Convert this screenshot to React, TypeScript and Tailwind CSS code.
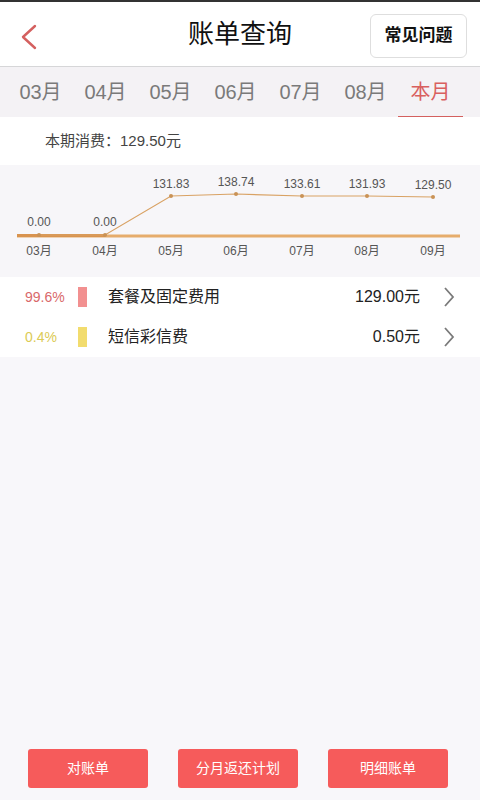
const tabs = ["03月", "04月", "05月", "06月", "07月", "08月", "本月"];

const points = [
  { m: "03月", x: 39, y: 70, v: "0.00", ty: 61 },
  { m: "04月", x: 105, y: 70, v: "0.00", ty: 61 },
  { m: "05月", x: 171, y: 31, v: "131.83", ty: 23 },
  { m: "06月", x: 236, y: 29, v: "138.74", ty: 21 },
  { m: "07月", x: 302, y: 31, v: "133.61", ty: 23 },
  { m: "08月", x: 367, y: 31, v: "131.93", ty: 23 },
  { m: "09月", x: 433, y: 32, v: "129.50", ty: 24 },
];

const items = [
  { pct: "99.6%", pctColor: "text-[#d9686a]", bar: "bg-[#f29090]", label: "套餐及固定费用", amount: "129.00元" },
  { pct: "0.4%", pctColor: "text-[#dccb55]", bar: "bg-[#f2dc6e]", label: "短信彩信费", amount: "0.50元" },
];

const font = { fontFamily: '"Liberation Sans", "Noto Sans CJK SC", sans-serif' };

function Chart() {
  const line = points.map((p) => `${p.x},${p.y}`).join(" ");
  return (
    <svg width="480" height="112" viewBox="0 0 480 112" className="block">
      <line x1="17" y1="71" x2="460" y2="71" stroke="#e6ac6c" strokeWidth="3" />
      <line x1="17" y1="70.5" x2="105" y2="70.5" stroke="#d8934f" strokeWidth="3" />
      <polyline points={line} fill="none" stroke="#d9a264" strokeWidth="1.2" />
      {points.map((p) => (
        <g key={p.m}>
          <circle cx={p.x} cy={p.y} r="2" fill="#c99256" />
          <text x={p.x} y={p.ty} textAnchor="middle" fontSize="12" fill="#555" style={font}>
            {p.v}
          </text>
          <text x={p.x} y={90} textAnchor="middle" fontSize="12" fill="#555" style={font}>
            {p.m}
          </text>
        </g>
      ))}
    </svg>
  );
}

export default function App() {
  return (
    <div className="flex h-[800px] w-[480px] flex-col bg-[#f8f7fa]" style={font}>
      <div className="h-[2px] bg-[#333]" />
      <header className="relative flex h-[65px] items-center justify-center border-b border-[#d6d6d8] bg-white">
        <svg className="absolute left-[19px] top-[22px]" width="20" height="26" viewBox="0 0 20 26">
          <polyline points="16,2 4,13 16,24" fill="none" stroke="#d4605f" strokeWidth="2.4" strokeLinecap="round" strokeLinejoin="round" />
        </svg>
        <h1 className="text-[26px] leading-none text-[#111]">账单查询</h1>
        <button className="absolute right-[13px] top-[12px] flex h-[44px] w-[97px] items-center justify-center rounded-md border border-[#dedede] bg-white text-[17px] font-bold text-[#111]">
          常见问题
        </button>
      </header>

      <nav className="flex h-[50px] bg-[#f4f2f5] pl-[8px]">
        {tabs.map((t, i) => {
          const active = i === tabs.length - 1;
          return (
            <div
              key={t}
              className={`flex w-[65px] items-center justify-center text-[20px] ${
                active ? "border-b border-[#d4605f] text-[#d9605f]" : "text-[#7a7a7a]"
              }`}
            >
              {t}
            </div>
          );
        })}
      </nav>

      <div className="flex h-[48px] items-center bg-white pl-[45px] text-[15px] text-[#444]">
        本期消费：129.50元
      </div>

      <div className="bg-[#f7f6f9]">
        <Chart />
      </div>

      <ul className="bg-white">
        {items.map((it) => (
          <li key={it.label} className="flex h-[40px] items-center">
            <span className={`w-[78px] pl-[25px] text-[14px] ${it.pctColor}`}>{it.pct}</span>
            <span className={`h-[20px] w-[9px] ${it.bar}`} />
            <span className="ml-[21px] flex-1 text-[16px] text-[#222]">{it.label}</span>
            <span className="text-[16px] text-[#222]">{it.amount}</span>
            <svg className="ml-[22px] mr-[24px]" width="14" height="22" viewBox="0 0 14 22">
              <polyline points="3,2 11,11 3,20" fill="none" stroke="#7a7a7a" strokeWidth="1.8" />
            </svg>
          </li>
        ))}
      </ul>

      <div className="mt-auto flex gap-[30px] pb-[12px] pl-[28px]">
        {["对账单", "分月返还计划", "明细账单"].map((b) => (
          <button
            key={b}
            className="flex h-[39px] w-[120px] items-center justify-center rounded-[3px] bg-[#f65b5b] text-[14px] text-white"
          >
            {b}
          </button>
        ))}
      </div>
    </div>
  );
}
